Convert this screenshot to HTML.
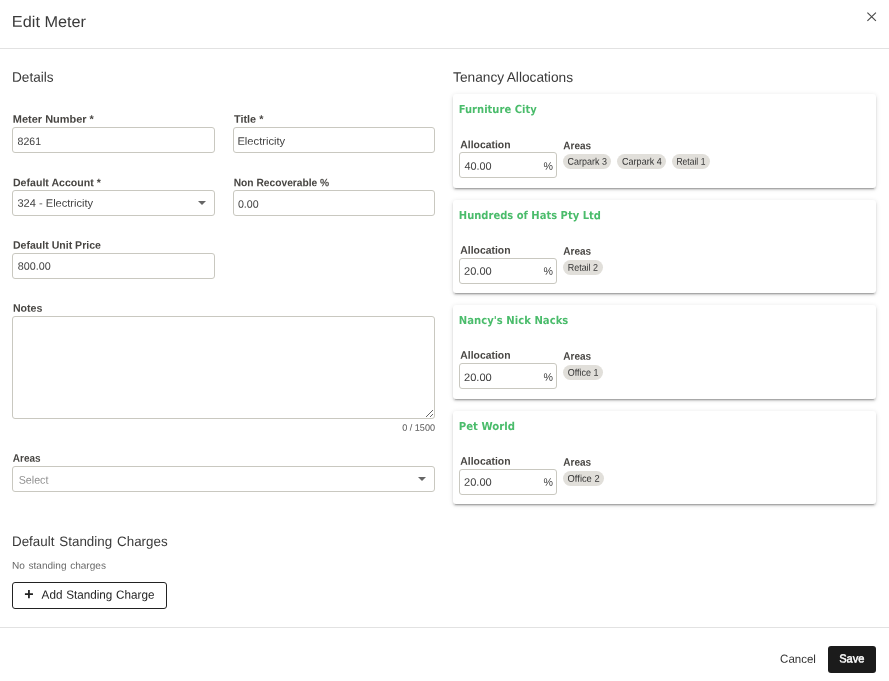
<!DOCTYPE html>
<html lang="en">
<head>
<meta charset="utf-8">
<title>Edit Meter</title>
<style>
html,body{margin:0;padding:0;background:#fff;}
body{width:889px;height:681px;position:relative;overflow:hidden;font-family:'Liberation Sans',Arial,sans-serif;}
.t{position:absolute;white-space:nowrap;transform-origin:0 84.6%;display:block;}
.hr{position:absolute;left:0;width:889px;height:1px;background:#e2e2e2;}
.inp{position:absolute;box-sizing:border-box;border:1px solid #c9c8c0;border-radius:3px;background:#fff;}
.card{position:absolute;left:453px;width:423px;border-radius:3px;background:#fff;box-shadow:0 3px 1px -2px rgba(0,0,0,.2),0 2px 2px 0 rgba(0,0,0,.14),0 1px 5px 0 rgba(0,0,0,.12);}
.chip{position:absolute;height:15px;border-radius:7.5px;background:#e1dfda;}
.btn{position:absolute;box-sizing:border-box;border-radius:3px;}
svg{position:absolute;overflow:visible;}
</style>
</head>
<body>
<div class="hr" style="top:48px"></div>
<div class="hr" style="top:627px"></div>
<!-- close icon -->
<svg style="left:867px;top:12px" width="10" height="10" viewBox="0 0 10 10"><path d="M0.4 0.7 L8.9 8.9 M8.9 0.7 L0.4 8.9" stroke="#484848" stroke-width="1.15" fill="none"/></svg>
<!-- inputs -->
<div class="inp" style="left:12px;top:127px;width:203px;height:26px"></div>
<div class="inp" style="left:233px;top:127px;width:202px;height:26px"></div>
<div class="inp" style="left:12px;top:190px;width:203px;height:26px"></div>
<div class="inp" style="left:233px;top:190px;width:202px;height:26px"></div>
<div class="inp" style="left:12px;top:253px;width:203px;height:26px"></div>
<div class="inp" style="left:12px;top:316px;width:423px;height:103px"></div>
<div class="inp" style="left:12px;top:466px;width:423px;height:26px"></div>
<!-- dropdown arrows -->
<svg style="left:197.5px;top:201px" width="8" height="4" viewBox="0 0 8 4"><path d="M0 0 H8 L4 4 Z" fill="#666"/></svg>
<svg style="left:418.2px;top:477px" width="8" height="4" viewBox="0 0 8 4"><path d="M0 0 H8 L4 4 Z" fill="#666"/></svg>
<!-- resize handle -->
<svg style="left:425px;top:409px" width="9" height="9" viewBox="0 0 9 9"><path d="M1 8 L8 1 M5 8 L8 5" stroke="#555" stroke-width="0.9" fill="none"/></svg>
<!-- buttons -->
<div class="btn" style="left:12px;top:582px;width:155px;height:27px;border:1px solid #222;"></div>
<div class="btn" style="left:828px;top:646px;width:48px;height:27px;background:#1b1b1b;"></div>
<div class="card" style="top:94px;height:94px"></div>
<div class="inp" style="left:459px;top:152px;width:98px;height:26px"></div>
<div class="chip" style="left:563.0px;top:154px;width:48.0px"></div>
<div class="chip" style="left:617.0px;top:154px;width:49.4px"></div>
<div class="chip" style="left:671.8px;top:154px;width:38.4px"></div>
<div class="card" style="top:200px;height:93px"></div>
<div class="inp" style="left:459px;top:258px;width:98px;height:26px"></div>
<div class="chip" style="left:563.0px;top:260px;width:39.7px"></div>
<div class="card" style="top:305px;height:94px"></div>
<div class="inp" style="left:459px;top:363px;width:98px;height:26px"></div>
<div class="chip" style="left:563.0px;top:365px;width:39.7px"></div>
<div class="card" style="top:411px;height:93px"></div>
<div class="inp" style="left:459px;top:469px;width:98px;height:26px"></div>
<div class="chip" style="left:563.0px;top:471px;width:41.0px"></div>
<div id="tx" style="position:absolute;left:0;top:0;width:889px;height:681px;will-change:transform;">
<span class="t" style="left:12px;top:14px;font:400 15.65px/15.65px 'Liberation Sans', Arial, sans-serif;color:#3a3a3a;transform:translate(-0.13px,-0.13px) scale(1.0405,1.000) rotate(0.03deg)">Edit Meter</span>
<span class="t" style="left:12px;top:71px;font:400 13.69px/13.69px 'Liberation Sans', Arial, sans-serif;color:#3a3a3a;transform:translate(0.02px,-0.18px) scale(0.9940,1.000) rotate(0.03deg)">Details</span>
<span class="t" style="left:453px;top:71px;font:400 13.69px/13.69px 'Liberation Sans', Arial, sans-serif;color:#3a3a3a;word-spacing:-0.5px;transform:translate(0.04px,-0.18px) scale(1.0021,1.000) rotate(0.03deg)">Tenancy Allocations</span>
<span class="t" style="left:13px;top:114px;font:700 10.76px/10.76px 'Liberation Sans', Arial, sans-serif;color:#474542;transform:translate(-0.14px,-0.31px) scale(1.0192,1.000) rotate(0.03deg)">Meter Number *</span>
<span class="t" style="left:234px;top:114px;font:700 10.76px/10.76px 'Liberation Sans', Arial, sans-serif;color:#474542;transform:translate(0.05px,-0.31px) scale(1.0079,1.000) rotate(0.03deg)">Title *</span>
<span class="t" style="left:13px;top:177px;font:700 10.76px/10.76px 'Liberation Sans', Arial, sans-serif;color:#474542;transform:translate(-0.02px,0.19px) scale(0.9847,1.000) rotate(0.03deg)">Default Account *</span>
<span class="t" style="left:234px;top:177px;font:700 10.76px/10.76px 'Liberation Sans', Arial, sans-serif;color:#474542;transform:translate(-0.30px,0.19px) scale(0.9515,1.000) rotate(0.03deg)">Non Recoverable %</span>
<span class="t" style="left:13px;top:240px;font:700 10.76px/10.76px 'Liberation Sans', Arial, sans-serif;color:#474542;transform:translate(-0.10px,-0.21px) scale(0.9825,1.000) rotate(0.03deg)">Default Unit Price</span>
<span class="t" style="left:13px;top:303px;font:700 10.76px/10.76px 'Liberation Sans', Arial, sans-serif;color:#474542;transform:translate(-0.09px,-0.31px) scale(0.9865,1.000) rotate(0.03deg)">Notes</span>
<span class="t" style="left:13px;top:453px;font:700 10.76px/10.76px 'Liberation Sans', Arial, sans-serif;color:#474542;transform:translate(-0.20px,-0.31px) scale(0.9294,1.000) rotate(0.03deg)">Areas</span>
<span class="t" style="left:18px;top:136px;font:400 10.76px/10.76px 'Liberation Sans', Arial, sans-serif;color:#424242;transform:translate(-0.40px,-0.08px) scale(0.9802,1.000) rotate(0.03deg)">8261</span>
<span class="t" style="left:237px;top:136px;font:400 10.76px/10.76px 'Liberation Sans', Arial, sans-serif;color:#424242;transform:translate(0.42px,-0.21px) scale(1.0385,1.000) rotate(0.03deg)">Electricity</span>
<span class="t" style="left:17px;top:198px;font:400 10.76px/10.76px 'Liberation Sans', Arial, sans-serif;color:#424242;transform:translate(0.45px,-0.35px) scale(1.0298,1.000) rotate(0.03deg)">324 - Electricity</span>
<span class="t" style="left:238px;top:199px;font:400 10.76px/10.76px 'Liberation Sans', Arial, sans-serif;color:#424242;transform:translate(-0.09px,-0.21px) scale(0.9921,1.000) rotate(0.03deg)">0.00</span>
<span class="t" style="left:18px;top:261px;font:400 10.76px/10.76px 'Liberation Sans', Arial, sans-serif;color:#424242;transform:translate(-0.35px,-0.35px) scale(1.0030,1.000) rotate(0.03deg)">800.00</span>
<span class="t" style="left:402px;top:423px;font:400 9.39px/9.39px 'Liberation Sans', Arial, sans-serif;color:#555;transform:translate(0.16px,-0.15px) scale(0.9686,1.000) rotate(0.03deg)">0 / 1500</span>
<span class="t" style="left:19px;top:475px;font:400 11.15px/11.15px 'Liberation Sans', Arial, sans-serif;color:#929292;transform:translate(-0.31px,-0.15px) scale(0.9606,1.000) rotate(0.03deg)">Select</span>
<span class="t" style="left:12px;top:535px;font:400 13.69px/13.69px 'Liberation Sans', Arial, sans-serif;color:#3a3a3a;word-spacing:1.3px;transform:translate(0.02px,-0.09px) scale(0.9762,1.000) rotate(0.03deg)">Default Standing Charges</span>
<span class="t" style="left:12px;top:561px;font:400 9.78px/9.78px 'Liberation Sans', Arial, sans-serif;color:#666;word-spacing:0.8px;transform:translate(0.05px,-0.33px) scale(1.0294,1.000) rotate(0.03deg)">No standing charges</span>
<span class="t" style="left:24px;top:587px;font:700 16.00px/16.00px 'Liberation Sans', Arial, sans-serif;color:#222;transform:translate(0.33px,-0.44px) scale(0.9997,1.000) rotate(0.03deg)">+</span>
<span class="t" style="left:42px;top:590px;font:400 11.93px/11.93px 'Liberation Sans', Arial, sans-serif;color:#222;word-spacing:0.5px;transform:translate(-0.38px,-0.24px) scale(0.9809,1.000) rotate(0.03deg)">Add Standing Charge</span>
<span class="t" style="left:780px;top:653px;font:400 11.74px/11.74px 'Liberation Sans', Arial, sans-serif;color:#333;transform:translate(0.07px,-0.13px) scale(0.9801,1.000) rotate(0.03deg)">Cancel</span>
<span class="t" style="left:839px;top:653px;font:400 11.74px/11.74px 'Liberation Sans', Arial, sans-serif;color:#fff;-webkit-text-stroke:0.45px #fff;transform:translate(0.19px,-0.44px) scale(0.9472,1.000) rotate(0.03deg)">Save</span>
<span class="t" style="left:459px;top:104px;font:700 11.00px/11.00px 'DejaVu Sans', 'Liberation Sans', sans-serif;color:#4abc6b;transform:translate(-0.33px,0.05px) scale(0.9080,1.000) rotate(0.03deg)">Furniture City</span>
<span class="t" style="left:460px;top:139px;font:700 10.76px/10.76px 'Liberation Sans', Arial, sans-serif;color:#474542;transform:translate(0.34px,0.19px) scale(0.9653,1.000) rotate(0.03deg)">Allocation</span>
<span class="t" style="left:563px;top:140px;font:700 10.76px/10.76px 'Liberation Sans', Arial, sans-serif;color:#474542;transform:translate(0.37px,0.19px) scale(0.9284,1.000) rotate(0.03deg)">Areas</span>
<span class="t" style="left:464px;top:161px;font:400 10.76px/10.76px 'Liberation Sans', Arial, sans-serif;color:#424242;transform:translate(0.42px,-0.20px) scale(1.0123,1.000) rotate(0.03deg)">40.00</span>
<span class="t" style="left:544px;top:161px;font:400 10.76px/10.76px 'Liberation Sans', Arial, sans-serif;color:#424242;transform:translate(-0.45px,-0.35px) scale(0.9904,1.000) rotate(0.03deg)">%</span>
<span class="t" style="left:568px;top:157px;font:400 9.78px/9.78px 'Liberation Sans', Arial, sans-serif;color:#333;transform:translate(-0.40px,-0.18px) scale(0.9165,1.000) rotate(0.03deg)">Carpark 3</span>
<span class="t" style="left:622px;top:157px;font:400 9.78px/9.78px 'Liberation Sans', Arial, sans-serif;color:#333;transform:translate(0.06px,-0.36px) scale(0.9247,1.000) rotate(0.03deg)">Carpark 4</span>
<span class="t" style="left:676px;top:157px;font:400 9.78px/9.78px 'Liberation Sans', Arial, sans-serif;color:#333;transform:translate(0.41px,-0.18px) scale(0.8749,1.000) rotate(0.03deg)">Retail 1</span>
<span class="t" style="left:459px;top:210px;font:700 11.00px/11.00px 'DejaVu Sans', 'Liberation Sans', sans-serif;color:#4abc6b;transform:translate(-0.22px,0.05px) scale(0.9065,1.000) rotate(0.03deg)">Hundreds of Hats Pty Ltd</span>
<span class="t" style="left:460px;top:245px;font:700 10.76px/10.76px 'Liberation Sans', Arial, sans-serif;color:#474542;transform:translate(0.34px,-0.19px) scale(0.9651,1.000) rotate(0.03deg)">Allocation</span>
<span class="t" style="left:563px;top:246px;font:700 10.76px/10.76px 'Liberation Sans', Arial, sans-serif;color:#474542;transform:translate(0.36px,-0.19px) scale(0.9314,1.000) rotate(0.03deg)">Areas</span>
<span class="t" style="left:464px;top:266px;font:400 10.76px/10.76px 'Liberation Sans', Arial, sans-serif;color:#424242;transform:translate(-0.02px,-0.20px) scale(1.0305,1.000) rotate(0.03deg)">20.00</span>
<span class="t" style="left:544px;top:266px;font:400 10.76px/10.76px 'Liberation Sans', Arial, sans-serif;color:#424242;transform:translate(-0.45px,-0.35px) scale(0.9904,1.000) rotate(0.03deg)">%</span>
<span class="t" style="left:568px;top:263px;font:400 9.78px/9.78px 'Liberation Sans', Arial, sans-serif;color:#333;transform:translate(-0.29px,-0.37px) scale(0.9166,1.000) rotate(0.03deg)">Retail 2</span>
<span class="t" style="left:459px;top:315px;font:700 11.00px/11.00px 'DejaVu Sans', 'Liberation Sans', sans-serif;color:#4abc6b;transform:translate(-0.22px,0.05px) scale(0.9164,1.000) rotate(0.03deg)">Nancy's Nick Nacks</span>
<span class="t" style="left:460px;top:350px;font:700 10.76px/10.76px 'Liberation Sans', Arial, sans-serif;color:#474542;transform:translate(0.34px,-0.19px) scale(0.9651,1.000) rotate(0.03deg)">Allocation</span>
<span class="t" style="left:563px;top:351px;font:700 10.76px/10.76px 'Liberation Sans', Arial, sans-serif;color:#474542;transform:translate(0.36px,-0.19px) scale(0.9314,1.000) rotate(0.03deg)">Areas</span>
<span class="t" style="left:464px;top:372px;font:400 10.76px/10.76px 'Liberation Sans', Arial, sans-serif;color:#424242;transform:translate(0.03px,0.01px) scale(1.0310,1.000) rotate(0.03deg)">20.00</span>
<span class="t" style="left:544px;top:372px;font:400 10.76px/10.76px 'Liberation Sans', Arial, sans-serif;color:#424242;transform:translate(-0.45px,-0.31px) scale(0.9904,1.000) rotate(0.03deg)">%</span>
<span class="t" style="left:568px;top:368px;font:400 9.78px/9.78px 'Liberation Sans', Arial, sans-serif;color:#333;transform:translate(-0.34px,-0.18px) scale(0.9183,1.000) rotate(0.03deg)">Office 1</span>
<span class="t" style="left:459px;top:421px;font:700 11.00px/11.00px 'DejaVu Sans', 'Liberation Sans', sans-serif;color:#4abc6b;transform:translate(-0.27px,0.05px) scale(0.9230,1.000) rotate(0.03deg)">Pet World</span>
<span class="t" style="left:460px;top:456px;font:700 10.76px/10.76px 'Liberation Sans', Arial, sans-serif;color:#474542;transform:translate(0.34px,-0.21px) scale(0.9651,1.000) rotate(0.03deg)">Allocation</span>
<span class="t" style="left:563px;top:457px;font:700 10.76px/10.76px 'Liberation Sans', Arial, sans-serif;color:#474542;transform:translate(0.36px,-0.21px) scale(0.9314,1.000) rotate(0.03deg)">Areas</span>
<span class="t" style="left:464px;top:477px;font:400 10.76px/10.76px 'Liberation Sans', Arial, sans-serif;color:#424242;transform:translate(-0.02px,-0.20px) scale(1.0305,1.000) rotate(0.03deg)">20.00</span>
<span class="t" style="left:544px;top:477px;font:400 10.76px/10.76px 'Liberation Sans', Arial, sans-serif;color:#424242;transform:translate(-0.45px,-0.35px) scale(0.9904,1.000) rotate(0.03deg)">%</span>
<span class="t" style="left:568px;top:474px;font:400 9.78px/9.78px 'Liberation Sans', Arial, sans-serif;color:#333;transform:translate(-0.38px,-0.18px) scale(0.9548,1.000) rotate(0.03deg)">Office 2</span>
</div>
</body>
</html>
